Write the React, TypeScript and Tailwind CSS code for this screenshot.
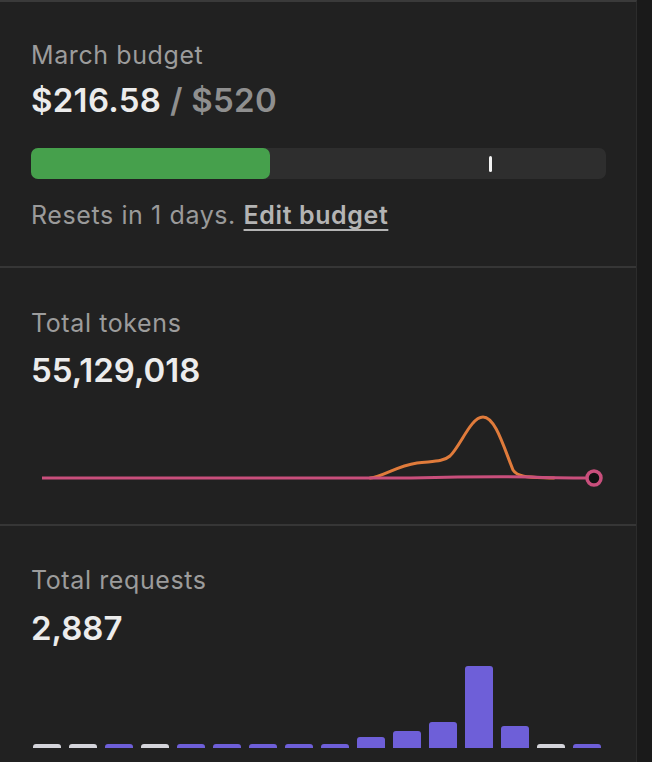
import React from "react";

const bars: { h: number; c: "g" | "p" }[] = [
  { h: 4, c: "g" },
  { h: 4, c: "g" },
  { h: 4, c: "p" },
  { h: 4, c: "g" },
  { h: 4, c: "p" },
  { h: 4, c: "p" },
  { h: 4, c: "p" },
  { h: 4, c: "p" },
  { h: 4, c: "p" },
  { h: 11, c: "p" },
  { h: 17, c: "p" },
  { h: 26, c: "p" },
  { h: 82, c: "p" },
  { h: 22, c: "p" },
  { h: 4, c: "g" },
  { h: 4, c: "p" },
];

export default function App() {
  return (
    <div
      className="flex h-[762px] w-[652px] overflow-hidden bg-[#1a1a1a]"
      style={{ fontFamily: "Inter, 'Noto Sans', sans-serif" }}
    >
      <div className="flex w-[637px] shrink-0 flex-col border-t-2 border-r border-t-[#3a3a3a] border-r-[#2c2c2c] bg-[#212121]">
        {/* Budget */}
        <section className="h-[266px] shrink-0 border-b-2 border-[#363636] pl-[31px] pr-[31px] pt-[38px]">
          <div className="text-[25px] leading-[30px] tracking-[0.6px] text-[#9c9c9c]">March budget</div>
          <div className="mt-[10px] text-[33px] font-semibold leading-[40px] tracking-[0.3px] text-[#ececec]">
            $216.58 <span className="text-[#8f8f8f]">/ $520</span>
          </div>
          <div className="relative mt-[28px] h-[31px] w-[575px] rounded-[7px] bg-[#2e2e2e]">
            <div className="h-full w-[239px] rounded-[7px] bg-[#46a04c]" />
            <div className="absolute left-[458px] top-[8px] h-[16px] w-[3px] rounded-full bg-[#f2f2f2]" />
          </div>
          <div className="mt-[21px] text-[25px] leading-[30px] tracking-[0.6px] text-[#9a9a9a]">
            Resets in 1 days.{" "}
            <span className="font-semibold text-[#b4b4b4] underline decoration-[2px] underline-offset-[5px]">
              Edit budget
            </span>
          </div>
        </section>

        {/* Tokens */}
        <section className="h-[258px] shrink-0 border-b-2 border-[#363636] pl-[31px] pt-[40px]">
          <div className="text-[25px] leading-[30px] tracking-[0.6px] text-[#9c9c9c]">Total tokens</div>
          <div className="mt-[12px] text-[33px] font-semibold leading-[40px] text-[#ececec]">55,129,018</div>
          <svg className="mt-[10px] block" width="575" height="90" viewBox="0 0 575 90">
            <path
              d="M 339 78 C 352 77, 365 66, 386 63 C 402 61, 412 62, 419 56 C 430 45, 440 17, 452 17 C 464 17, 472 45, 482 70 C 487 78, 500 77, 523 78"
              fill="none"
              stroke="#e07b3b"
              strokeWidth="3"
              strokeLinecap="round"
            />
            <path
              d="M 11 78 L 380 78 C 420 77, 470 76.5, 500 77 C 520 78, 540 78, 563 78"
              fill="none"
              stroke="#c94f7c"
              strokeWidth="3"
            />
            <circle cx="563" cy="78" r="7" fill="#121212" stroke="#c94f7c" strokeWidth="3.5" />
          </svg>
        </section>

        {/* Requests */}
        <section className="flex-1 pl-[31px] pt-[39px]">
          <div className="text-[25px] leading-[30px] tracking-[0.6px] text-[#9c9c9c]">Total requests</div>
          <div className="mt-[13px] text-[33px] font-semibold leading-[40px] text-[#ececec]">2,887</div>
          <div className="ml-[2px] mt-[12px] flex h-[88px] items-end gap-[8px]">
            {bars.map((b, i) => (
              <div
                key={i}
                className={`w-[28px] rounded-t-[3px] ${b.c === "g" ? "bg-[#d4d4da]" : "bg-[#6e5fd8]"}`}
                style={{ height: b.h }}
              />
            ))}
          </div>
        </section>
      </div>
      <div className="flex-1" />
    </div>
  );
}
